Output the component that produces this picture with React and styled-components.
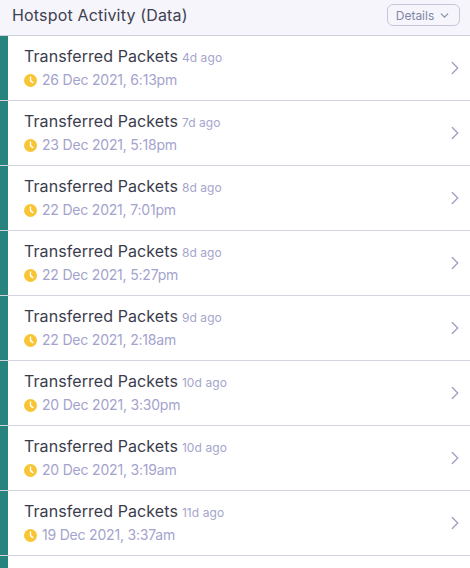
import React from "react"
import styled, { createGlobalStyle } from "styled-components"
import { ChevronDown, ChevronRight } from "lucide-react"

const GlobalStyle = createGlobalStyle`
  html, body {
    margin: 0;
    padding: 0;
    height: 568px;
    overflow: hidden;
    background: #fff;
    font-family: Inter, "Liberation Sans", sans-serif;
  }
`

const Panel = styled.div`
  width: 470px;
  height: 568px;
  overflow: hidden;
`

const Header = styled.div`
  box-sizing: border-box;
  height: 36px;
  display: flex;
  align-items: center;
  justify-content: space-between;
  padding: 0 10px 5px 12px;
  background: #f5f5fb;
  border-bottom: 1px solid #cfcfdd;
`

const Title = styled.div`
  font-size: 16px;
  color: #3f4150;
  letter-spacing: 0.17px;
`

const DetailsButton = styled.button`
  box-sizing: border-box;
  width: 73px;
  height: 22px;
  display: flex;
  align-items: center;
  justify-content: center;
  gap: 4px;
  padding: 0;
  font-family: inherit;
  font-size: 12px;
  color: #8187a8;
  background: transparent;
  border: 1px solid #c6c7da;
  border-radius: 6px;
`

const Row = styled.div`
  box-sizing: border-box;
  height: 65px;
  display: flex;
  border-bottom: 1px solid #d3d3e0;
`

const StatusBar = styled.div`
  width: 8px;
  flex-shrink: 0;
  background: #26837d;
`

const RowBody = styled.div`
  flex: 1;
  display: flex;
  align-items: center;
  justify-content: space-between;
  padding: 0 4px 0 16px;
`

const Info = styled.div`
  display: flex;
  flex-direction: column;
  gap: 3px;
  padding-bottom: 1px;
`

const RowTitle = styled.div`
  display: flex;
  align-items: baseline;
  gap: 4px;
  font-size: 16px;
  line-height: 20px;
  letter-spacing: 0.08px;
  color: #3a3c4c;
`

const Ago = styled.span`
  font-size: 12px;
  color: #a5a5cc;
`

const DateLine = styled.div`
  display: flex;
  align-items: center;
  gap: 5px;
  font-size: 14px;
  line-height: 18px;
  letter-spacing: -0.2px;
  color: #a3a3cd;
`

const ClockIcon = () => (
  <svg width="13" height="13" viewBox="0 0 13 13">
    <circle cx="6.5" cy="6.5" r="6.5" fill="#f8c535" />
    <path d="M6.5 3v3.6l2.3 2" fill="none" stroke="#fff" strokeWidth="1.4" strokeLinecap="round" />
  </svg>
)

const rows = [
  { ago: "4d ago", date: "26 Dec 2021, 6:13pm" },
  { ago: "7d ago", date: "23 Dec 2021, 5:18pm" },
  { ago: "8d ago", date: "22 Dec 2021, 7:01pm" },
  { ago: "8d ago", date: "22 Dec 2021, 5:27pm" },
  { ago: "9d ago", date: "22 Dec 2021, 2:18am" },
  { ago: "10d ago", date: "20 Dec 2021, 3:30pm" },
  { ago: "10d ago", date: "20 Dec 2021, 3:19am" },
  { ago: "11d ago", date: "19 Dec 2021, 3:37am" },
  { ago: "", date: "" },
]

export default function App() {
  return (
    <Panel>
      <GlobalStyle />
      <Header>
        <Title>Hotspot Activity (Data)</Title>
        <DetailsButton>
          Details
          <ChevronDown size={13} />
        </DetailsButton>
      </Header>
      {rows.map((row, i) => (
        <Row key={i}>
          <StatusBar />
          {row.date && (
            <RowBody>
              <Info>
                <RowTitle>
                  Transferred Packets <Ago>{row.ago}</Ago>
                </RowTitle>
                <DateLine>
                  <ClockIcon />
                  {row.date}
                </DateLine>
              </Info>
              <ChevronRight size={22} color="#9c9fc4" strokeWidth={1.4} />
            </RowBody>
          )}
        </Row>
      ))}
    </Panel>
  )
}
